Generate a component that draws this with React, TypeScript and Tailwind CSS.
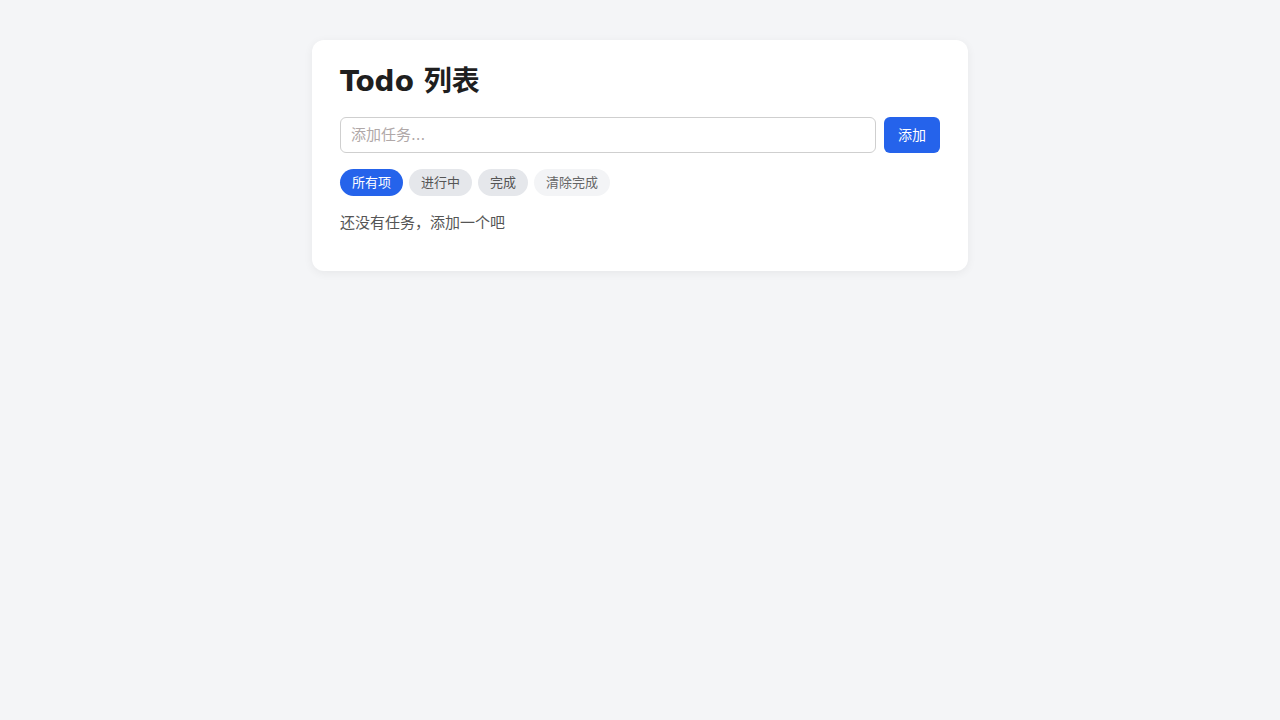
import { useState } from "react";

const filters = [
	{ key: "all", label: "所有项" },
	{ key: "active", label: "进行中" },
	{ key: "done", label: "完成" },
];

export default function App() {
	const [filter, setFilter] = useState("all");
	const [text, setText] = useState("");

	return (
		<div
			className="min-h-screen bg-[#f4f5f7] pt-10"
			style={{ fontFamily: '"DejaVu Sans", "Noto Sans CJK SC", sans-serif' }}
		>
			<div className="mx-auto w-[656px] rounded-xl bg-white px-7 pt-[26px] pb-[37px] shadow-[0_2px_10px_rgba(0,0,0,0.06)]">
				<h1 className="text-[28px] font-bold leading-[32px] text-[#1f1f1f]">Todo 列表</h1>
				<div className="mt-[19px] flex gap-2">
					<input
						value={text}
						onChange={(e) => setText(e.target.value)}
						placeholder="添加任务..."
						className="h-9 flex-1 rounded-md border border-[#cfcfcf] px-2.5 text-[15px] text-gray-800 outline-none placeholder:text-[#b0a8a8]"
					/>
					<button className="h-9 w-14 rounded-md bg-[#2563eb] text-[14px] text-white">添加</button>
				</div>
				<div className="mt-4 flex gap-1.5">
					{filters.map((f) => (
						<button
							key={f.key}
							onClick={() => setFilter(f.key)}
							className={
								filter === f.key
									? "h-[27px] rounded-full bg-[#2563eb] px-3 text-[13px] text-white"
									: "h-[27px] rounded-full bg-[#e5e7eb] px-3 text-[13px] text-[#555]"
							}
						>
							{f.label}
						</button>
					))}
					<button className="h-[27px] rounded-full bg-[#f3f4f6] px-3 text-[13px] text-[#666]">清除完成</button>
				</div>
				<p className="mt-4 text-[15px] leading-[22px] text-[#555]">还没有任务，添加一个吧</p>
			</div>
		</div>
	);
}
